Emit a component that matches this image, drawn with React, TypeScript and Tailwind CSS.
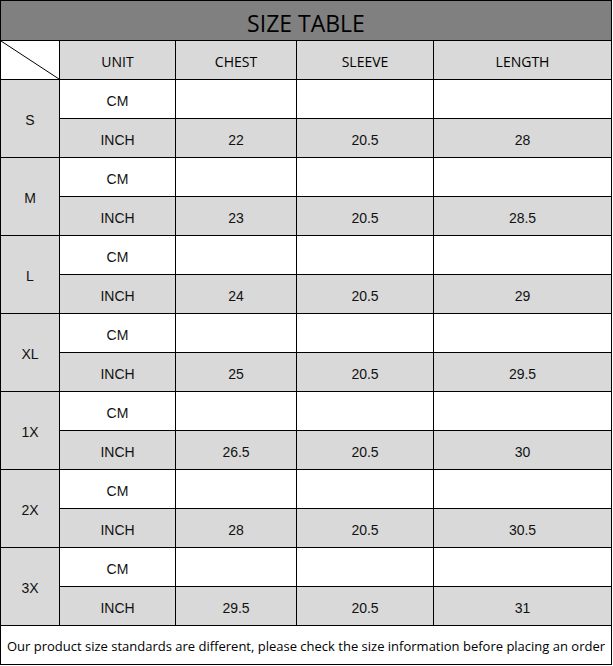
import React from 'react';

const sizes = [
  { size: 'S', chest: '22', sleeve: '20.5', length: '28' },
  { size: 'M', chest: '23', sleeve: '20.5', length: '28.5' },
  { size: 'L', chest: '24', sleeve: '20.5', length: '29' },
  { size: 'XL', chest: '25', sleeve: '20.5', length: '29.5' },
  { size: '1X', chest: '26.5', sleeve: '20.5', length: '30' },
  { size: '2X', chest: '28', sleeve: '20.5', length: '30.5' },
  { size: '3X', chest: '29.5', sleeve: '20.5', length: '31' },
];

const head = "flex items-center justify-center pt-[3px] bg-[#d9d9d9] text-[14px] font-medium text-black font-['Open_Sans',sans-serif]";
const cell = "flex items-center justify-center pt-[4px] text-[14px] text-[#111] font-['Liberation_Sans',Arial,sans-serif]";

const App: React.FC = () => {
  return (
    <div className="w-[613px] h-[666px] bg-white">
      <div className="grid w-[612px] grid-cols-[58px_115px_120px_136px_177px] grid-rows-[39px_repeat(15,38px)_38px] gap-px bg-black p-px">
        <div className="col-span-5 flex items-center justify-center pt-[5px] bg-[#808080] text-[23px] font-medium text-black font-['Open_Sans',sans-serif]">
          SIZE TABLE
        </div>

        <div className="relative bg-white">
          <svg className="absolute inset-0 h-full w-full" viewBox="0 0 58 38" preserveAspectRatio="none">
            <line x1="0" y1="0" x2="58" y2="38" stroke="#000" strokeWidth="1" />
          </svg>
        </div>
        <div className={head}>UNIT</div>
        <div className={head}>CHEST</div>
        <div className={head}>SLEEVE</div>
        <div className={head}>LENGTH</div>

        {sizes.map((s) => (
          <React.Fragment key={s.size}>
            <div className={`${cell} row-span-2 bg-[#d9d9d9]`}>{s.size}</div>
            <div className={`${cell} bg-white`}>CM</div>
            <div className="bg-white" />
            <div className="bg-white" />
            <div className="bg-white" />
            <div className={`${cell} bg-[#d9d9d9]`}>INCH</div>
            <div className={`${cell} bg-[#d9d9d9]`}>{s.chest}</div>
            <div className={`${cell} bg-[#d9d9d9]`}>{s.sleeve}</div>
            <div className={`${cell} bg-[#d9d9d9]`}>{s.length}</div>
          </React.Fragment>
        ))}

        <div className="col-span-5 flex items-center justify-center pt-[3px] bg-white text-[13px] text-black font-['Open_Sans',sans-serif]">
          Our product size standards are different, please check the size information before placing an order
        </div>
      </div>
    </div>
  );
};

export default App;
